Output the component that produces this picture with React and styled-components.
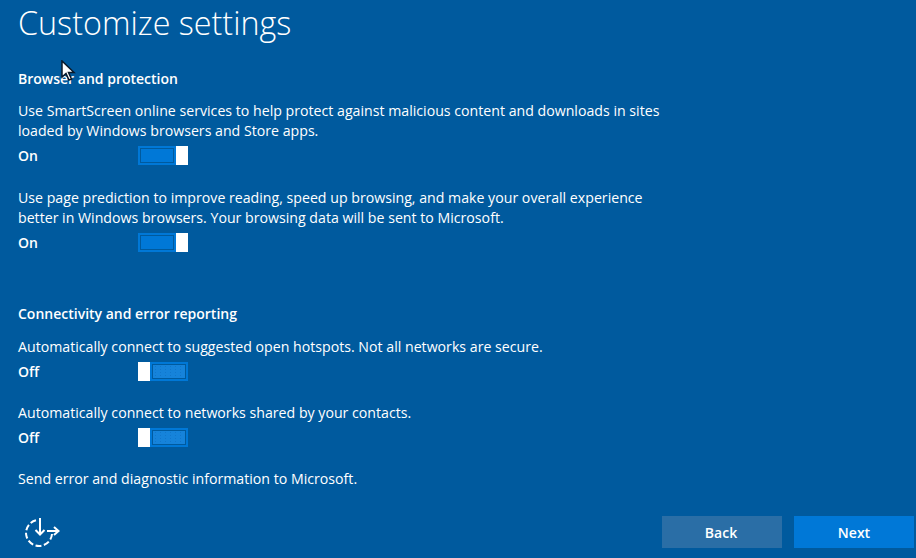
import React from "react";
import styled, { createGlobalStyle } from "styled-components";

const Global = createGlobalStyle`
  html, body { margin: 0; padding: 0; background: #005a9e; }
  body { width: 916px; height: 558px; overflow: hidden; font-family: "Open Sans", "Noto Sans", sans-serif; color: #fff; }
`;

const Page = styled.div`
  position: relative;
  width: 916px;
  height: 558px;
  background: #005a9e;
  display: flex;
  flex-direction: column;
  padding: 0 2px 0 18px;
  box-sizing: border-box;
  overflow: hidden;
`;
const Title = styled.h1`
  margin: 2px 0 1px;
  height: 40px;
  font-size: 32.3px;
  line-height: 40px;
  font-weight: 300;
  letter-spacing: 0;
`;
const Section = styled.section`
  display: flex;
  flex-direction: column;
  margin-top: ${(p) => p.$top}px;
`;
const Heading = styled.h2`
  margin: 0;
  font-size: 14px;
  line-height: 20px;
  font-weight: 600;
`;
const Setting = styled.div`
  margin-top: ${(p) => p.$top}px;
`;
const Description = styled.p`
  margin: 0;
  font-size: 14.17px;
  line-height: 20px;
  width: 660px;
`;
const ToggleRow = styled.div`
  display: flex;
  align-items: center;
  height: 20px;
  margin-top: 4px;
`;
const State = styled.span`
  width: 120px;
  font-size: 14px;
  font-weight: 600;
`;
const Track = styled.span`
  display: flex;
  justify-content: ${(p) => (p.$on ? "flex-end" : "flex-start")};
  width: 50px;
  height: 19px;
  background: #0078d7;
  box-sizing: border-box;
  position: relative;
`;
const Inset = styled.span`
  flex: 1;
  margin: 2px;
  border: 1px solid #005a9e;
  background-color: ${(p) => (p.$on ? "#0078d7" : "#1683da")};
  background-image: ${(p) =>
    p.$on ? "none" : "radial-gradient(#1176cc 0.5px, transparent 0.7px)"};
  background-size: 5px 3px;
`;
const Thumb = styled.span`
  width: 12px;
  background: #fff;
`;
const Footer = styled.div`
  margin-top: auto;
  padding-bottom: 10px;
  display: flex;
  align-items: center;
  gap: 12px;
`;
const Spinner = styled.svg`
  width: 36px;
  height: 32px;
  margin: 0 auto 0 6px;
`;
const Button = styled.button`
  width: 120px;
  height: 32px;
  border: 0;
  padding: ${(p) => (p.$primary ? "0" : "0 2px 0 0")};
  color: #fff;
  font: 600 14px "Open Sans", "Noto Sans", sans-serif;
  background: ${(p) => (p.$primary ? "#0078d7" : "#2a6ea6")};
`;
const Cursor = styled.svg`
  position: absolute;
  left: 60px;
  top: 60px;
  width: 16px;
  height: 22px;
`;

const Toggle = ({ on }) => (
  <ToggleRow>
    <State>{on ? "On" : "Off"}</State>
    <Track $on={on}>
      {on ? <><Inset $on /><Thumb /></> : <><Thumb /><Inset /></>}
    </Track>
  </ToggleRow>
);

export default function App() {
  return (
    <Page>
      <Global />
      <Title>Customize settings</Title>
      <Section $top={26}>
        <Heading>Browser and protection</Heading>
        <Setting $top={12}>
          <Description>Use SmartScreen online services to help protect against malicious content and downloads in sites loaded by Windows browsers and Store apps.</Description>
          <Toggle on />
        </Setting>
        <Setting $top={23}>
          <Description>Use page prediction to improve reading, speed up browsing, and make your overall experience better in Windows browsers. Your browsing data will be sent to Microsoft.</Description>
          <Toggle on />
        </Setting>
      </Section>
      <Section $top={52}>
        <Heading>Connectivity and error reporting</Heading>
        <Setting $top={13}>
          <Description>Automatically connect to suggested open hotspots. Not all networks are secure.</Description>
          <Toggle />
        </Setting>
        <Setting $top={22}>
          <Description>Automatically connect to networks shared by your contacts.</Description>
          <Toggle />
        </Setting>
        <Setting $top={22}>
          <Description>Send error and diagnostic information to Microsoft.</Description>
        </Setting>
      </Section>
      <Footer>
        <Spinner viewBox="0 0 36 32" fill="none" stroke="#fff" strokeWidth="2">
          <path d="M12 4.3A13 13 0 1 0 28 18" strokeDasharray="6 2.5" />
          <path d="M16 2V18M11.5 14L16 18.5L20.5 14" />
          <path d="M23 15H34M30 11L34.5 15L30 19" />
        </Spinner>
        <Button>Back</Button>
        <Button $primary>Next</Button>
      </Footer>
      <Cursor viewBox="0 0 16 22">
        <path d="M2 1V17L6 13.5L9 20L11.5 19L8.5 12.5H14Z" fill="#fff" stroke="#0b1a2a" strokeWidth="1.5" />
      </Cursor>
    </Page>
  );
}
